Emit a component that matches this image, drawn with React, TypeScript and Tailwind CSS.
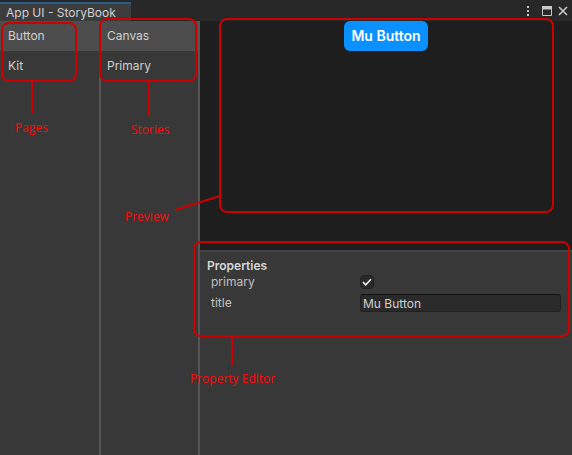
import { useState } from "react";

function ListColumn({ label, items, className }: { label: string; items: string[]; className: string }) {
  const [selected, setSelected] = useState(0);
  return (
    <nav aria-label={label} className={`flex shrink-0 flex-col border-r-2 border-[#555555] bg-[#383838] ${className}`}>
      {items.map((item, i) => (
        <button
          key={item}
          type="button"
          onClick={() => setSelected(i)}
          className={
            i === selected
              ? "h-[30px] bg-[#4d4d4d] text-left text-xs text-[#d0d0d0]"
              : "h-[30px] text-left text-xs text-[#d0d0d0]"
          }
        >
          {item}
        </button>
      ))}
    </nav>
  );
}

function TitleBar() {
  return (
    <header className="flex h-[21px] items-end justify-between bg-[#282828]">
      <h1 className="h-[19px] w-[131px] border-t-2 border-[#2c5d87] bg-[#3c3c3c] pl-[6px] text-xs leading-[18px] text-[#d0d0d0]">
        App UI - StoryBook
      </h1>
      <div className="flex h-full items-center gap-1 pr-[3px] text-[#c8c8c8]">
        <button type="button" aria-label="Menu">
          <svg width="12" height="12" viewBox="0 0 12 12" fill="currentColor">
            <path d="M2 1h2v2H2zM2 5h2v2H2zM2 9h2v2H2z" />
          </svg>
        </button>
        <button type="button" aria-label="Maximize">
          <svg width="12" height="12" viewBox="0 0 12 12" fill="none">
            <path d="M1.5 1.5h9v9h-9z" stroke="currentColor" />
            <path d="M1 1h10v3.5H1z" fill="currentColor" />
          </svg>
        </button>
        <button type="button" aria-label="Close">
          <svg width="12" height="12" viewBox="0 0 12 12" stroke="currentColor" strokeWidth="1.6">
            <path d="M2 2l8 8M10 2l-8 8" />
          </svg>
        </button>
      </div>
    </header>
  );
}

function Properties() {
  const [primary, setPrimary] = useState(true);
  const [title, setTitle] = useState("Mu Button");
  return (
    <section className="flex-1 border-t-2 border-[#444444] bg-[#383838] pt-[6px] pr-[11px] pl-[7px] text-xs text-[#c0c0c0]">
      <h2 className="leading-4 font-semibold text-[#d6d6d6]">Properties</h2>
      <div className="flex h-4 items-center pl-1">
        <label htmlFor="primary" className="w-[149px]">
          primary
        </label>
        <span className="relative flex">
          <input
            id="primary"
            type="checkbox"
            checked={primary}
            onChange={(e) => setPrimary(e.target.checked)}
            className="size-[14px] appearance-none rounded-sm border border-[#202020] bg-[#2a2a2a]"
          />
          {primary && (
            <svg
              className="pointer-events-none absolute inset-0"
              width="14"
              height="14"
              viewBox="0 0 14 14"
              fill="none"
              stroke="#eeeeee"
              strokeWidth="1.6"
            >
              <path d="M3 7.2l2.7 2.6L11 4.3" />
            </svg>
          )}
        </span>
      </div>
      <div className="mt-1 flex h-[18px] items-center pl-1">
        <label htmlFor="title" className="w-[149px]">
          title
        </label>
        <input
          id="title"
          type="text"
          value={title}
          onChange={(e) => setTitle(e.target.value)}
          className="h-[18px] min-w-0 flex-1 rounded-[3px] border border-[#202020] border-t-[#101010] bg-[#2a2a2a] px-[2px] text-[#d0d0d0]"
        />
      </div>
    </section>
  );
}

/* Red call-outs drawn over the window. */
function Annotations() {
  return (
    <div className="pointer-events-none absolute inset-0 font-['Open_Sans',sans-serif] text-xs leading-4 text-[#ff0808]">
      <div className="absolute top-[22px] left-[1px] h-[60px] w-[76px] rounded-lg border-2 border-[#cc0000]" />
      <div className="absolute top-[18px] left-[99px] h-[64px] w-[98px] rounded-lg border-2 border-[#cc0000]" />
      <div className="absolute top-[18px] right-[18px] left-[219px] h-[195px] rounded-lg border-2 border-[#cc0000]" />
      <div className="absolute top-[241px] right-[2px] left-[193px] h-[96px] rounded-lg border-2 border-[#cc0000]" />
      <svg className="absolute top-0 left-0" width="280" height="400" viewBox="0 0 280 400" stroke="#cc0000" strokeWidth="2" fill="none">
        <path d="M32 81v32M149 81v35M175 210l45-14M232 337v29" />
      </svg>
      <span className="absolute top-[120px] left-[15px]">Pages</span>
      <span className="absolute top-[122px] left-[131px]">Stories</span>
      <span className="absolute top-[209px] left-[125px]">Preview</span>
      <span className="absolute top-[371px] left-[190px] whitespace-nowrap">Property Editor</span>
    </div>
  );
}

export default function App() {
  return (
    <div className="relative flex min-h-screen flex-col bg-[#383838] font-['Inter',sans-serif]">
      <TitleBar />
      <main className="flex flex-1">
        <ListColumn label="Pages" items={["Button", "Kit"]} className="w-[101px] *:px-2" />
        <ListColumn label="Stories" items={["Canvas", "Primary"]} className="w-[99px] *:px-[6px]" />
        <div className="flex min-w-0 flex-1 flex-col">
          <section aria-label="Preview" className="flex h-[229px] items-start justify-center bg-[#1e1e1e]">
            <button
              type="button"
              className="h-[30px] rounded-md bg-[#0a90ff] px-[7px] text-sm font-semibold text-white"
            >
              Mu Button
            </button>
          </section>
          <Properties />
        </div>
      </main>
      <Annotations />
    </div>
  );
}
